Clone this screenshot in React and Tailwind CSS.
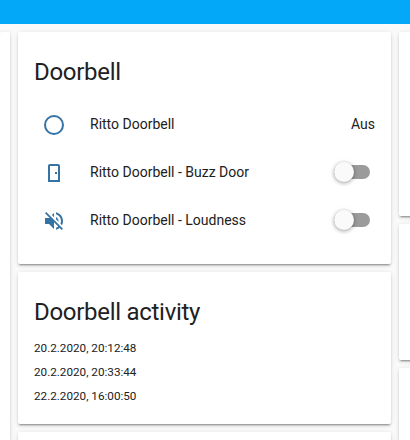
const cardShadow =
  'shadow-[0_2px_2px_0_rgba(0,0,0,0.14),0_1px_5px_0_rgba(0,0,0,0.12),0_3px_1px_-2px_rgba(0,0,0,0.2)]';

const icons = {
  circle:
    'M12,20A8,8 0 0,1 4,12A8,8 0 0,1 12,4A8,8 0 0,1 20,12A8,8 0 0,1 12,20M12,2A10,10 0 0,0 2,12A10,10 0 0,0 12,22A10,10 0 0,0 22,12A10,10 0 0,0 12,2Z',
  door: 'M8,3C6.89,3 6,3.89 6,5V21H18V5C18,3.89 17.11,3 16,3H8M8,5H16V19H8V5M13,11V13H15V11H13Z',
  muted:
    'M12,4L9.91,6.09L12,8.18M4.27,3L3,4.27L7.73,9H3V15H7L12,20V13.27L16.25,17.53C15.58,18.04 14.83,18.46 14,18.7V20.77C15.38,20.45 16.63,19.82 17.68,18.96L19.73,21L21,19.73L12,10.73M19,12C19,12.94 18.8,13.82 18.46,14.64L19.97,16.15C20.62,14.91 21,13.5 21,12C21,7.72 18,4.14 14,3.23V5.29C16.89,6.15 19,8.83 19,12M16.5,12C16.5,10.23 15.5,8.71 14,7.97V10.18L16.45,12.63C16.5,12.43 16.5,12.21 16.5,12Z',
};

function Card({ className = '', children }) {
  return <section className={`shrink-0 rounded-[2px] bg-white ${cardShadow} ${className}`}>{children}</section>;
}

function Title({ children }) {
  return <h2 className="text-2xl leading-8 font-normal tracking-[-0.012em]">{children}</h2>;
}

function Toggle() {
  return (
    <button type="button" className="mr-[5px] flex h-3.5 w-9 items-center rounded-full bg-[#9b9b9b]">
      <span className="h-5 w-5 shrink-0 rounded-full bg-[#fafafa] shadow-[0_1px_4px_0_rgba(0,0,0,0.4)]" />
    </button>
  );
}

function Row({ icon, name, children }) {
  return (
    <div className="flex h-10 items-center">
      <svg viewBox="0 0 24 24" className="mt-0.5 ml-2 h-6 w-6 shrink-0 fill-[#3673a5]">
        <path d={icons[icon]} />
      </svg>
      <span className="ml-6 flex-1 whitespace-nowrap">{name}</span>
      {children}
    </div>
  );
}

export default function App() {
  return (
    <div className="flex h-[440px] w-[410px] flex-col overflow-hidden bg-[#fafafa] font-[Roboto,sans-serif] text-sm text-[#212121] antialiased">
      <header className="h-6 shrink-0 bg-[#03a9f8]" />
      <main className="flex min-h-0 flex-1 gap-2 overflow-hidden pt-2">
        <div className="flex w-2.5 shrink-0 flex-col">
          <Card className="h-[420px]" />
        </div>
        <div className="flex w-[373px] shrink-0 flex-col gap-2">
          <Card className="h-[232px] px-4 pt-6">
            <Title>Doorbell</Title>
            <div className="mt-4 flex flex-col gap-2">
              <Row icon="circle" name="Ritto Doorbell">
                <span>Aus</span>
              </Row>
              <Row icon="door" name="Ritto Doorbell - Buzz Door">
                <Toggle />
              </Row>
              <Row icon="muted" name="Ritto Doorbell - Loudness">
                <Toggle />
              </Row>
            </div>
          </Card>
          <Card className="h-[152px] px-4 pt-6">
            <Title>Doorbell activity</Title>
            <div className="mt-2 text-[11.7px] leading-6">
              <p>20.2.2020, 20:12:48</p>
              <p>20.2.2020, 20:33:44</p>
              <p>22.2.2020, 16:00:50</p>
            </div>
          </Card>
          <Card className="h-20" />
        </div>
        <div className="flex w-5 shrink-0 flex-col gap-2">
          <Card className="h-[184px]" />
          <Card className="h-[136px]" />
          <Card className="h-[100px]" />
        </div>
      </main>
    </div>
  );
}
